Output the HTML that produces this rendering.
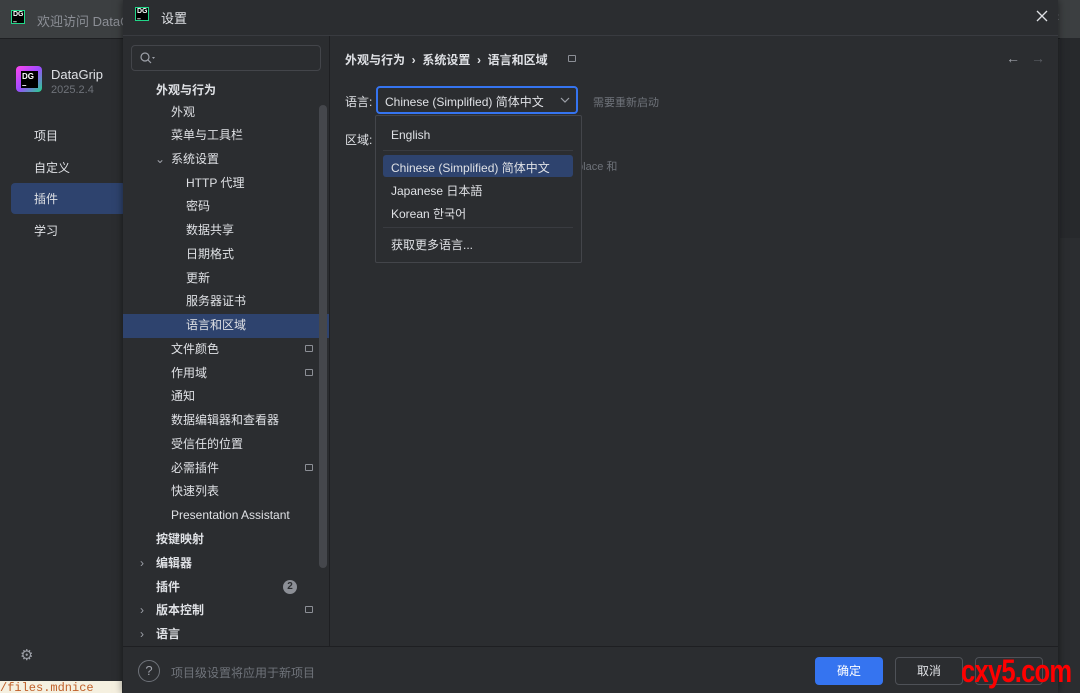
<!DOCTYPE html>
<html><head><meta charset="utf-8"><style>
*{margin:0;padding:0;box-sizing:border-box}
body{width:1080px;height:693px;overflow:hidden;background:#2b2d30;font-family:"Liberation Sans","Noto Sans CJK SC",sans-serif;font-size:12px;color:#dfe1e5;position:relative}
.abs{position:absolute}
.logo{width:14px;height:14px;background:#000;border:1px solid #21d789;color:#fff;font-size:7px;font-weight:bold;line-height:8px;padding-left:1px}
.tree div{position:absolute;height:24px;line-height:24px;white-space:nowrap;font-size:12px}
.b{font-weight:bold}
.arr{color:#9da0a8;font-size:11px}
.pin{position:absolute;width:8px;height:7px;border:1px solid #8c8f96;border-radius:1px}
</style></head><body>
<div class="abs" style="left:0;top:0;width:1080px;height:38px;background:#3c3f41"></div>
<div class="abs" style="left:0;top:38px;width:1080px;height:1px;background:#1e1f22"></div>
<div class="abs logo" style="left:11px;top:10px">DG<br>–</div>
<div class="abs" style="left:37px;top:11px;color:#8c8f96;font-size:13px">欢迎访问 DataGrip</div>
<div class="abs" style="left:16px;top:66px;width:26px;height:26px;background:linear-gradient(135deg,#ff45ed,#9d4bff 50%,#21d789);border-radius:4px"></div>
<div class="abs" style="left:21px;top:71px;width:17px;height:17px;background:#000;color:#fff;font-size:8px;font-weight:bold;line-height:9px;padding:1px">DG<br>–</div>
<div class="abs" style="left:51px;top:67px;font-size:13px">DataGrip</div>
<div class="abs" style="left:51px;top:84px;font-size:11px;color:#6f737a">2025.2.4</div>
<div class="abs" style="left:34px;top:127px;font-size:12px">项目</div>
<div class="abs" style="left:34px;top:159px">自定义</div>
<div class="abs" style="left:11px;top:183px;width:115px;height:31px;background:#2e436e;border-radius:4px"></div>
<div class="abs" style="left:34px;top:190px">插件</div>
<div class="abs" style="left:34px;top:222px">学习</div>
<div class="abs" style="left:20px;top:646px;color:#9da0a8;font-size:15px">⚙</div>
<div class="abs" style="left:1060px;top:38px;width:20px;height:200px;background:#27292c"></div>
<div class="abs" style="left:1055px;top:8px;color:#6f737a;font-size:14px">‹</div>
<div class="abs" style="left:0;top:681px;width:122px;height:12px;background:#f5f0e0;color:#c0602a;font-family:'Liberation Mono',monospace;font-size:12px;line-height:14px;overflow:hidden">/files.mdnice</div>

<div class="abs" style="left:123px;top:0;width:935px;height:693px;background:#2b2d30;box-shadow:0 0 8px rgba(0,0,0,.5)"></div>
<div class="abs" style="left:123px;top:35px;width:935px;height:1px;background:#393b40"></div>
<div class="abs logo" style="left:135px;top:7px">DG<br>–</div>
<div class="abs" style="left:161px;top:8px;font-size:13px">设置</div>
<svg class="abs" style="left:1036px;top:10px" width="12" height="12"><path d="M1 1L11 11M11 1L1 11" stroke="#dfe1e5" stroke-width="1.3"/></svg>
<div class="abs" style="left:329px;top:36px;width:1px;height:611px;background:#1e1f22"></div>
<div class="abs" style="left:123px;top:646px;width:935px;height:1px;background:#1e1f22"></div>
<div class="abs" style="left:131px;top:45px;width:190px;height:26px;border:1px solid #43454a;border-radius:4px"></div>
<svg class="abs" style="left:140px;top:52px" width="16" height="12"><circle cx="5" cy="5" r="4" fill="none" stroke="#9da0a8" stroke-width="1.2"/><path d="M8 8L11 11" stroke="#9da0a8" stroke-width="1.2"/><path d="M12 5L15 5L13.5 7Z" fill="#9da0a8"/></svg>
<div class="abs" style="left:123px;top:314px;width:206px;height:24px;background:#2e436e"></div>
<div class="abs" style="left:319px;top:105px;width:8px;height:463px;background:#45474c;border-radius:4px"></div>
<div class="tree">
<div class="b" style="left:156px;top:78px">外观与行为</div>
<div style="left:171px;top:100px">外观</div>
<div style="left:171px;top:123px">菜单与工具栏</div>
<div class="arr" style="left:155px;top:147px">⌄</div>
<div style="left:171px;top:147px">系统设置</div>
<div style="left:186px;top:171px">HTTP 代理</div>
<div style="left:186px;top:194px">密码</div>
<div style="left:186px;top:218px">数据共享</div>
<div style="left:186px;top:242px">日期格式</div>
<div style="left:186px;top:266px">更新</div>
<div style="left:186px;top:289px">服务器证书</div>
<div style="left:186px;top:313px">语言和区域</div>
<div style="left:171px;top:337px">文件颜色</div>
<div style="left:171px;top:361px">作用域</div>
<div style="left:171px;top:384px">通知</div>
<div style="left:171px;top:408px">数据编辑器和查看器</div>
<div style="left:171px;top:432px">受信任的位置</div>
<div style="left:171px;top:456px">必需插件</div>
<div style="left:171px;top:479px">快速列表</div>
<div style="left:171px;top:503px">Presentation Assistant</div>
<div class="b" style="left:156px;top:527px">按键映射</div>
<div class="arr" style="left:140px;top:551px">›</div>
<div class="b" style="left:156px;top:551px">编辑器</div>
<div class="b" style="left:156px;top:575px">插件</div>
<div class="arr" style="left:140px;top:598px">›</div>
<div class="b" style="left:156px;top:598px">版本控制</div>
<div class="arr" style="left:140px;top:622px">›</div>
<div class="b" style="left:156px;top:622px">语言</div>
</div>
<div class="pin" style="left:305px;top:345px"></div>
<div class="pin" style="left:305px;top:369px"></div>
<div class="pin" style="left:305px;top:464px"></div>
<div class="pin" style="left:305px;top:606px"></div>
<div class="abs" style="left:283px;top:580px;width:14px;height:14px;border-radius:7px;background:#8c8f96;color:#2b2d30;font-size:10px;font-weight:bold;text-align:center;line-height:14px">2</div>
<div class="abs b" style="left:345px;top:51px;font-size:12px">外观与行为 &nbsp;›&nbsp; 系统设置 &nbsp;›&nbsp; 语言和区域</div>
<div class="pin" style="left:568px;top:55px"></div>
<div class="abs" style="left:1006px;top:50px;color:#9da0a8;font-size:14px">←</div>
<div class="abs" style="left:1031px;top:50px;color:#5a5d63;font-size:14px">→</div>
<div class="abs" style="left:345px;top:93px">语言:</div>
<div class="abs" style="left:376px;top:86px;width:202px;height:28px;border:2px solid #3574f0;border-radius:4px;background:#2b2d30"></div>
<div class="abs" style="left:385px;top:93px">Chinese (Simplified) 简体中文</div>
<svg class="abs" style="left:560px;top:97px" width="10" height="6"><path d="M1 1L5 5L9 1" fill="none" stroke="#9da0a8" stroke-width="1.2"/></svg>
<div class="abs" style="left:593px;top:94px;color:#6f737a;font-size:11px">需要重新启动</div>
<div class="abs" style="left:345px;top:131px">区域:</div>
<div class="abs" style="left:574px;top:158px;color:#6f737a;font-size:11px">tplace 和</div>
<div class="abs" style="left:375px;top:115px;width:207px;height:148px;background:#2b2d30;border:1px solid #43454a;border-radius:2px"></div>
<div class="abs" style="left:391px;top:128px">English</div>
<div class="abs" style="left:383px;top:150px;width:190px;height:1px;background:#393b40"></div>
<div class="abs" style="left:383px;top:155px;width:190px;height:22px;background:#2e436e;border-radius:3px"></div>
<div class="abs" style="left:391px;top:159px">Chinese (Simplified) 简体中文</div>
<div class="abs" style="left:391px;top:182px">Japanese 日本語</div>
<div class="abs" style="left:391px;top:205px">Korean 한국어</div>
<div class="abs" style="left:383px;top:227px;width:190px;height:1px;background:#393b40"></div>
<div class="abs" style="left:391px;top:236px">获取更多语言...</div>
<div class="abs" style="left:138px;top:660px;width:22px;height:22px;border:1px solid #6f737a;border-radius:11px;color:#9da0a8;text-align:center;line-height:20px;font-size:13px">?</div>
<div class="abs" style="left:171px;top:664px;color:#6f737a">项目级设置将应用于新项目</div>
<div class="abs" style="left:815px;top:657px;width:68px;height:28px;background:#3574f0;border-radius:4px;color:#fff;text-align:center;line-height:28px">确定</div>
<div class="abs" style="left:895px;top:657px;width:68px;height:28px;border:1px solid #4e5157;border-radius:4px;text-align:center;line-height:26px">取消</div>
<div class="abs" style="left:975px;top:657px;width:68px;height:28px;border:1px solid #4e5157;border-radius:4px"></div>
<div class="abs" style="left:961px;top:653px;color:#ff0000;font-weight:bold;font-size:32px;line-height:36px;font-family:'Liberation Sans',sans-serif;transform:scaleX(0.8);transform-origin:left top;letter-spacing:-1px">cxy5.com</div>
</body></html>
